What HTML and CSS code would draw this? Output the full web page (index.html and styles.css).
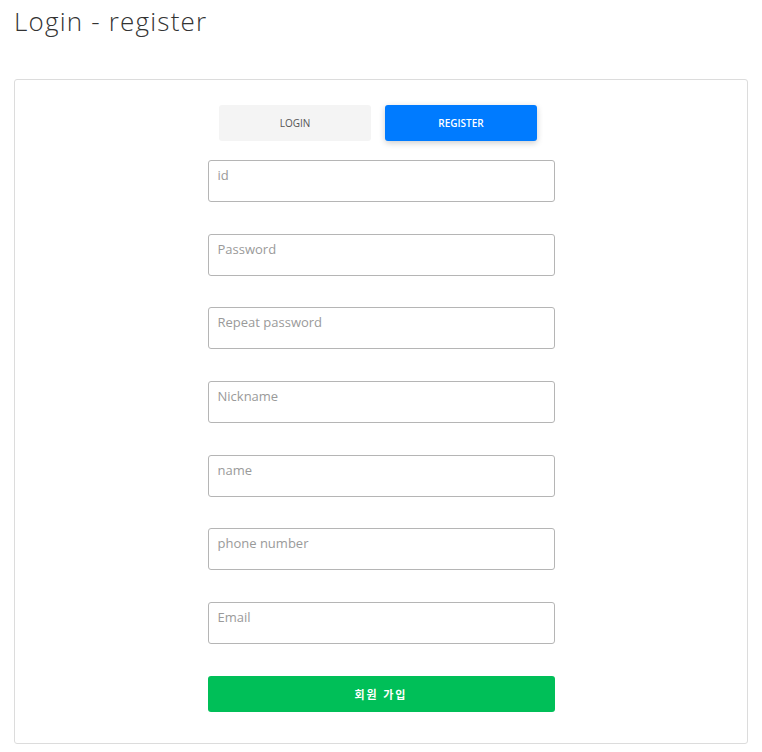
FILE: index.html
```html
<!DOCTYPE html>
<html>
<head>
<meta charset="utf-8">
<link rel="stylesheet" href="styles.css">
</head>
<body>
<h1 class="title">Login - register</h1>
<div class="card">
  <div class="tabs">
    <button class="tab">LOGIN</button>
    <button class="tab active">REGISTER</button>
  </div>
  <form class="form">
    <div class="field"><input class="input" placeholder="id"></div>
    <div class="field"><input class="input" placeholder="Password"></div>
    <div class="field"><input class="input" placeholder="Repeat password"></div>
    <div class="field"><input class="input" placeholder="Nickname"></div>
    <div class="field"><input class="input" placeholder="name"></div>
    <div class="field"><input class="input" placeholder="phone number"></div>
    <div class="field"><input class="input" placeholder="Email"></div>
    <button class="submit" type="button">회원 가입</button>
  </form>
</div>
</body>
</html>
```
FILE: styles.css
```css
* { box-sizing: border-box; }
body {
  margin: 0;
  padding: 0 14px;
  font-family: "Open Sans", "Noto Sans CJK KR", sans-serif;
  background: #fff;
  color: #333;
}
.title {
  margin: 0;
  padding-top: 3px;
  height: 79px;
  font-size: 26px;
  font-weight: 300;
  color: #333;
  letter-spacing: 1.2px;
}
.card {
  border: 1px solid #dcdcdc;
  border-radius: 3px;
  height: 665px;
  padding-top: 25px;
  display: flex;
  flex-direction: column;
  align-items: center;
}
.tabs {
  display: flex;
  gap: 14px;
  margin-left: -6px;
}
.tab {
  width: 152px;
  height: 36px;
  border: none;
  border-radius: 3px;
  background: #f4f4f4;
  color: #555;
  font-family: "Open Sans", sans-serif;
  font-size: 10px;
  font-weight: 500;
}
.tab.active {
  background: #007bff;
  color: #fff;
  font-weight: 600;
  box-shadow: 0 2px 6px rgba(0,0,0,0.2);
}
.form {
  margin-top: 19px;
  width: 347px;
  display: flex;
  flex-direction: column;
  gap: 31.7px;
}
.input {
  display: block;
  width: 100%;
  height: 42px;
  border: 1px solid #b5b5b5;
  border-radius: 3px;
  padding: 0 9px 12px;
  font-family: "Open Sans", sans-serif;
  font-size: 13px;
  color: #333;
}
.input::placeholder { color: #9a9a9a; }
.submit {
  height: 36px;
  border: none;
  border-radius: 3px;
  background: #00bf58;
  color: #fff;
  font-family: "Noto Sans CJK KR", sans-serif;
  font-size: 11px;
  font-weight: 700;
  letter-spacing: 2px;
}
```
